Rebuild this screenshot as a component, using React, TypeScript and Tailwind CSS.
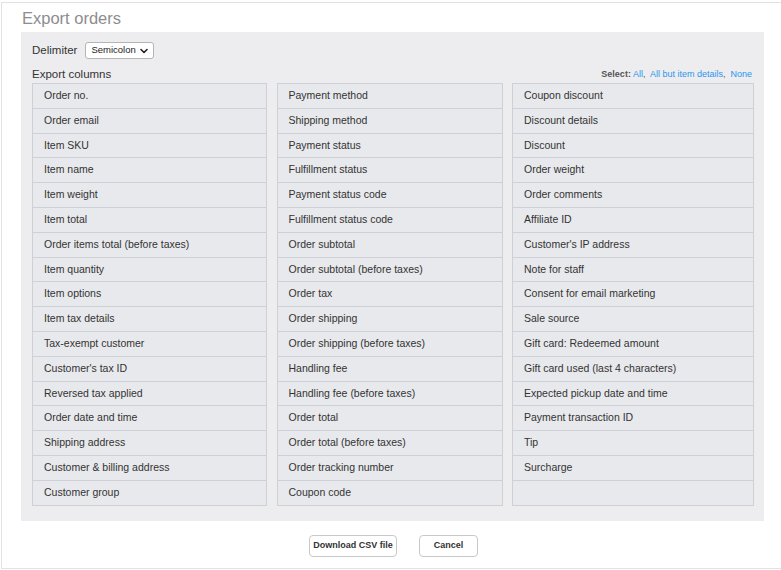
const col1 = [
  "Order no.",
  "Order email",
  "Item SKU",
  "Item name",
  "Item weight",
  "Item total",
  "Order items total (before taxes)",
  "Item quantity",
  "Item options",
  "Item tax details",
  "Tax-exempt customer",
  "Customer's tax ID",
  "Reversed tax applied",
  "Order date and time",
  "Shipping address",
  "Customer & billing address",
  "Customer group",
];

const col2 = [
  "Payment method",
  "Shipping method",
  "Payment status",
  "Fulfillment status",
  "Payment status code",
  "Fulfillment status code",
  "Order subtotal",
  "Order subtotal (before taxes)",
  "Order tax",
  "Order shipping",
  "Order shipping (before taxes)",
  "Handling fee",
  "Handling fee (before taxes)",
  "Order total",
  "Order total (before taxes)",
  "Order tracking number",
  "Coupon code",
];

const col3 = [
  "Coupon discount",
  "Discount details",
  "Discount",
  "Order weight",
  "Order comments",
  "Affiliate ID",
  "Customer's IP address",
  "Note for staff",
  "Consent for email marketing",
  "Sale source",
  "Gift card: Redeemed amount",
  "Gift card used (last 4 characters)",
  "Expected pickup date and time",
  "Payment transaction ID",
  "Tip",
  "Surcharge",
  "",
];

function Column({ items }: { items: string[] }) {
  return (
    <div className="border border-[#cfd0d5] border-b-0 bg-[#e8e9ec]">
      {items.map((label, i) => (
        <div
          key={i}
          className="h-[24.8px] border-b border-[#cfd0d5] pl-[11px] flex items-center text-[10.5px] text-[#333]"
        >
          {label}
        </div>
      ))}
    </div>
  );
}

export default function App() {
  return (
    <div className="w-[781px] h-[570px] bg-white overflow-hidden font-['Liberation_Sans',Arial,sans-serif]">
      <div className="ml-[1px] mt-[2px] h-[567px] w-[800px] border-l border-t border-b border-[#e2e2e4]">
        <h1 className="pl-[20px] pt-[5px] h-[29px] text-[16.5px] leading-[20px] text-[#8d8d90]">
          Export orders
        </h1>

        <div className="ml-[19px] w-[743px] bg-[#ededef] pl-[11px] pr-[10px] pt-[10px] pb-[15px]">
          <div className="flex items-center h-[17px]">
            <span className="text-[11.5px] text-[#333]">Delimiter</span>
            <div className="ml-[8px] h-[17px] w-[69px] bg-white border border-[#b5b5b8] rounded-[3px] flex items-center pl-[5px] pr-[5px]">
              <span className="text-[9.5px] text-[#222]">Semicolon</span>
              <svg className="ml-auto" width="8" height="6" viewBox="0 0 8 6">
                <path d="M1 1.5 L4 4.5 L7 1.5" fill="none" stroke="#222" strokeWidth="1.6" strokeLinecap="round" strokeLinejoin="round" />
              </svg>
            </div>
          </div>

          <div className="flex items-end justify-between mt-[7px] h-[15px]">
            <span className="text-[11.5px] text-[#333] leading-[14px]">Export columns</span>
            <span className="text-[9px] leading-[12px] mb-[1px] mr-[2px]">
              <span className="font-bold text-[#555]">Select:</span>{" "}
              <span className="text-[#2a95ef]">All</span>
              <span className="text-[#555]">,&nbsp; </span>
              <span className="text-[#2a95ef]">All but item details</span>
              <span className="text-[#555]">,&nbsp; </span>
              <span className="text-[#2a95ef]">None</span>
            </span>
          </div>

          <div className="mt-[2px] grid grid-cols-[235px_226px_242px] gap-x-[9.5px]">
            <Column items={col1} />
            <Column items={col2} />
            <Column items={col3} />
          </div>
        </div>

        <div className="flex gap-[22px] mt-[14px] pl-[307px]">
          <button className="h-[22px] w-[88px] bg-white border border-[#c9c9cc] rounded-[4px] text-[9px] font-bold text-[#333]">
            Download CSV file
          </button>
          <button className="h-[22px] w-[59px] bg-white border border-[#c9c9cc] rounded-[4px] text-[9px] font-bold text-[#333]">
            Cancel
          </button>
        </div>
      </div>
    </div>
  );
}
